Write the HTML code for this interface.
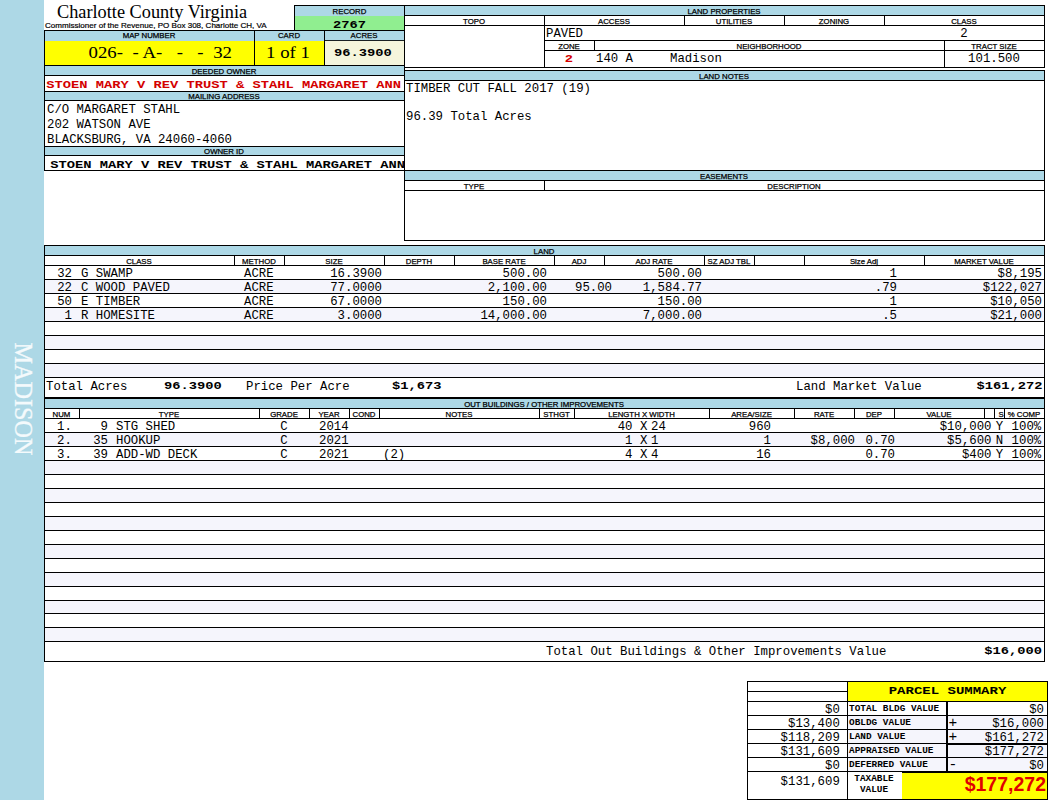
<!DOCTYPE html>
<html lang="en"><head><meta charset="utf-8"><title>Charlotte County Virginia - Property Card</title>
<style>
html,body{margin:0;padding:0;background:#fff;}
body{width:1050px;height:800px;position:relative;overflow:hidden;}
div{position:absolute;box-sizing:border-box;white-space:nowrap;}
.h{font-family:"Liberation Sans",Arial,sans-serif;font-size:7.8px;line-height:10px;color:#000;-webkit-text-stroke:0.25px #000;}
.m{font-family:"Liberation Mono","Courier New",monospace;font-size:12.33px;line-height:14px;color:#000;white-space:pre;}
.mb{font-family:"Liberation Mono","Courier New",monospace;font-size:13.75px;line-height:14px;font-weight:bold;color:#000;white-space:pre;transform:scaleY(.84);transform-origin:0 10.7px;}
.sb{font-family:"Liberation Mono","Courier New",monospace;font-size:9.4px;line-height:12px;font-weight:bold;color:#000;white-space:pre;}
.red{color:#d40000;}
.title{font-family:"Liberation Serif","Times New Roman",serif;font-size:18.3px;line-height:20px;color:#000;}
.sub{-webkit-text-stroke:0.2px #000;font-family:"Liberation Sans",Arial,sans-serif;font-size:8.05px;line-height:10px;color:#000;}
.big{font-family:"Liberation Serif","Times New Roman",serif;font-size:18.8px;line-height:24px;color:#000;transform:scaleY(.94);transform-origin:0 17px;}
.tv{font-family:"Liberation Sans",Arial,sans-serif;font-size:19.5px;line-height:26px;font-weight:bold;color:#e00000;}
</style></head>
<body>
<div style="left:0px;top:0px;width:44px;height:800px;background:#add8e6;"></div>
<div style="left:-37.5px;top:386.4px;width:120px;height:26px;line-height:26px;text-align:center;transform:rotate(90deg);font-family:'Liberation Serif','Times New Roman',serif;font-size:24.2px;color:#f4fafc;-webkit-text-stroke:0.3px #f4fafc;">MADISON</div>
<div class="title" style="left:57px;top:2.2px;">Charlotte County Virginia</div>
<div class="sub" style="left:45px;top:20.5px;">Commissioner of the Revenue, PO Box 308, Charlotte CH, VA</div>
<div style="left:294px;top:5px;width:111px;height:11px;background:#add8e6;"></div>
<div style="left:294px;top:16px;width:111px;height:14px;background:#90ee90;"></div>
<div style="left:294px;top:5px;width:111px;height:1px;background:#000;"></div>
<div style="left:294px;top:5px;width:1px;height:25px;background:#000;"></div>
<div class="h" style="left:294px;top:6.5px;width:111px;text-align:center;">RECORD</div>
<div class="mb" style="left:294px;top:17.9px;width:111px;text-align:center;">2767</div>
<div style="left:44px;top:30px;width:361px;height:11px;background:#add8e6;"></div>
<div style="left:44px;top:41px;width:280px;height:24px;background:#ffff00;"></div>
<div style="left:325px;top:41px;width:79px;height:24px;background:#f5f5dc;"></div>
<div style="left:325px;top:40px;width:79px;height:1px;background:rgba(0,0,0,.85);"></div>
<div style="left:44px;top:30px;width:361px;height:1px;background:#000;"></div>
<div style="left:44px;top:65px;width:361px;height:1px;background:#000;"></div>
<div style="left:44px;top:30px;width:1px;height:141px;background:#000;"></div>
<div style="left:254px;top:30px;width:1px;height:36px;background:#000;"></div>
<div style="left:324px;top:30px;width:1px;height:36px;background:#000;"></div>
<div style="left:404px;top:5px;width:1px;height:236px;background:#000;"></div>
<div class="h" style="left:44px;top:31.0px;width:210px;text-align:center;">MAP NUMBER</div>
<div class="h" style="left:254px;top:31.0px;width:70px;text-align:center;">CARD</div>
<div class="h" style="left:324px;top:31.0px;width:80px;text-align:center;">ACRES</div>
<div class="big" style="left:88.5px;top:39.7px;white-space:pre;word-spacing:0.1px;">026-  - A-   -   -  32</div>
<div class="big" style="left:253px;top:40.1px;width:70px;text-align:center;">1 of 1</div>
<div class="mb" style="left:323px;top:45.9px;width:80px;text-align:center;">96.3900</div>
<div style="left:45px;top:66px;width:359px;height:10px;background:#add8e6;"></div>
<div style="left:44px;top:75.0px;width:361px;height:1px;background:#000;"></div>
<div class="h" style="left:44px;top:67.0px;width:360px;text-align:center;">DEEDED OWNER</div>
<div class="mb red" style="left:46.3px;top:78.3px;">STOEN MARY V REV TRUST &amp; STAHL MARGARET ANN</div>
<div style="left:44px;top:91px;width:361px;height:1px;background:#000;"></div>
<div style="left:45px;top:92px;width:359px;height:9px;background:#add8e6;"></div>
<div style="left:44px;top:100px;width:361px;height:1px;background:#000;"></div>
<div class="h" style="left:44px;top:91.5px;width:360px;text-align:center;">MAILING ADDRESS</div>
<div class="m" style="left:47px;top:102.7px;">C/O MARGARET STAHL</div>
<div class="m" style="left:47px;top:117.7px;">202 WATSON AVE</div>
<div class="m" style="left:47px;top:132.7px;">BLACKSBURG, VA 24060-4060</div>
<div style="left:44px;top:146px;width:361px;height:1px;background:#000;"></div>
<div style="left:45px;top:147px;width:359px;height:8px;background:#add8e6;"></div>
<div style="left:44px;top:155px;width:361px;height:1px;background:#000;"></div>
<div class="h" style="left:44px;top:146.6px;width:360px;text-align:center;">OWNER ID</div>
<div class="mb" style="left:50.3px;top:157.7px;width:354px;overflow:hidden;">STOEN MARY V REV TRUST &amp; STAHL MARGARET ANN</div>
<div style="left:44px;top:170px;width:361px;height:1px;background:#000;"></div>
<div style="left:405px;top:6px;width:639px;height:9px;background:#add8e6;"></div>
<div style="left:404px;top:5px;width:641px;height:1px;background:#000;"></div>
<div style="left:404px;top:15px;width:641px;height:1px;background:#000;"></div>
<div style="left:404px;top:25px;width:641px;height:1px;background:#000;"></div>
<div style="left:544px;top:40px;width:501px;height:1px;background:#000;"></div>
<div style="left:544px;top:50px;width:501px;height:1px;background:#000;"></div>
<div style="left:404px;top:67px;width:641px;height:1px;background:#000;"></div>
<div style="left:1044px;top:5px;width:1px;height:63px;background:#000;"></div>
<div class="h" style="left:404px;top:6.5px;width:640px;text-align:center;">LAND PROPERTIES</div>
<div class="h" style="left:404px;top:16.5px;width:140px;text-align:center;">TOPO</div>
<div class="h" style="left:544px;top:16.5px;width:140px;text-align:center;">ACCESS</div>
<div style="left:544px;top:15px;width:1px;height:11px;background:#000;"></div>
<div class="h" style="left:684px;top:16.5px;width:100px;text-align:center;">UTILITIES</div>
<div style="left:684px;top:15px;width:1px;height:11px;background:#000;"></div>
<div class="h" style="left:784px;top:16.5px;width:100px;text-align:center;">ZONING</div>
<div style="left:784px;top:15px;width:1px;height:11px;background:#000;"></div>
<div class="h" style="left:884px;top:16.5px;width:160px;text-align:center;">CLASS</div>
<div style="left:884px;top:15px;width:1px;height:11px;background:#000;"></div>
<div style="left:544px;top:25px;width:1px;height:43px;background:#000;"></div>
<div class="m" style="left:546px;top:26.7px;">PAVED</div>
<div class="m" style="left:884px;top:26.7px;width:160px;text-align:center;">2</div>
<div style="left:594px;top:40px;width:1px;height:11px;background:#000;"></div>
<div style="left:944px;top:40px;width:1px;height:28px;background:#000;"></div>
<div class="h" style="left:544px;top:41.5px;width:50px;text-align:center;">ZONE</div>
<div class="h" style="left:594px;top:41.5px;width:350px;text-align:center;">NEIGHBORHOOD</div>
<div class="h" style="left:944px;top:41.5px;width:100px;text-align:center;">TRACT SIZE</div>
<div class="mb red" style="left:544px;top:51.5px;width:50px;text-align:center;">2</div>
<div class="m" style="left:596px;top:52.2px;">140 A</div>
<div class="m" style="left:670px;top:52.2px;">Madison</div>
<div class="m" style="left:944px;top:52.2px;width:100px;text-align:center;">101.500</div>
<div style="left:405px;top:71px;width:639px;height:9px;background:#add8e6;"></div>
<div style="left:404px;top:70px;width:641px;height:1px;background:#000;"></div>
<div style="left:404px;top:80px;width:641px;height:1px;background:#000;"></div>
<div style="left:404px;top:170px;width:641px;height:1px;background:#000;"></div>
<div style="left:1044px;top:70px;width:1px;height:171px;background:#000;"></div>
<div class="h" style="left:404px;top:71.5px;width:640px;text-align:center;">LAND NOTES</div>
<div class="m" style="left:406px;top:82.2px;">TIMBER CUT FALL 2017 (19)</div>
<div class="m" style="left:406px;top:110.2px;">96.39 Total Acres</div>
<div style="left:405px;top:171px;width:639px;height:9px;background:#add8e6;"></div>
<div style="left:404px;top:180px;width:641px;height:1px;background:#000;"></div>
<div style="left:404px;top:190px;width:641px;height:1px;background:#000;"></div>
<div style="left:404px;top:240px;width:641px;height:1px;background:#000;"></div>
<div style="left:544px;top:180px;width:1px;height:11px;background:#000;"></div>
<div class="h" style="left:404px;top:171.5px;width:640px;text-align:center;">EASEMENTS</div>
<div class="h" style="left:404px;top:181.5px;width:140px;text-align:center;">TYPE</div>
<div class="h" style="left:544px;top:181.5px;width:500px;text-align:center;">DESCRIPTION</div>
<div style="left:45px;top:246px;width:999px;height:9px;background:#add8e6;"></div>
<div style="left:44px;top:245px;width:1001px;height:1px;background:#000;"></div>
<div style="left:44px;top:255px;width:1001px;height:1px;background:#000;"></div>
<div style="left:44px;top:265px;width:1001px;height:1px;background:#000;"></div>
<div style="left:44px;top:245px;width:1px;height:417px;background:#000;"></div>
<div style="left:1044px;top:245px;width:1px;height:417px;background:#000;"></div>
<div class="h" style="left:44px;top:246.5px;width:1000px;text-align:center;">LAND</div>
<div class="h" style="left:44px;top:256.5px;width:190px;text-align:center;">CLASS</div>
<div class="h" style="left:234px;top:256.5px;width:50px;text-align:center;">METHOD</div>
<div style="left:234px;top:255px;width:1px;height:11px;background:#000;"></div>
<div class="h" style="left:284px;top:256.5px;width:100px;text-align:center;">SIZE</div>
<div style="left:284px;top:255px;width:1px;height:11px;background:#000;"></div>
<div class="h" style="left:384px;top:256.5px;width:70px;text-align:center;">DEPTH</div>
<div style="left:384px;top:255px;width:1px;height:11px;background:#000;"></div>
<div class="h" style="left:454px;top:256.5px;width:100px;text-align:center;">BASE RATE</div>
<div style="left:454px;top:255px;width:1px;height:11px;background:#000;"></div>
<div class="h" style="left:554px;top:256.5px;width:50px;text-align:center;">ADJ</div>
<div style="left:554px;top:255px;width:1px;height:11px;background:#000;"></div>
<div class="h" style="left:604px;top:256.5px;width:100px;text-align:center;">ADJ RATE</div>
<div style="left:604px;top:255px;width:1px;height:11px;background:#000;"></div>
<div class="h" style="left:704px;top:256.5px;width:50px;text-align:center;">SZ ADJ TBL</div>
<div style="left:704px;top:255px;width:1px;height:11px;background:#000;"></div>
<div style="left:754px;top:255px;width:1px;height:11px;background:#000;"></div>
<div class="h" style="left:804px;top:256.5px;width:120px;text-align:center;">Size Adj</div>
<div style="left:804px;top:255px;width:1px;height:11px;background:#000;"></div>
<div class="h" style="left:924px;top:256.5px;width:120px;text-align:center;">MARKET VALUE</div>
<div style="left:924px;top:255px;width:1px;height:11px;background:#000;"></div>
<div style="left:44px;top:279px;width:1001px;height:1px;background:#000;"></div>
<div style="left:45px;top:280px;width:999px;height:13px;background:#f5f5fc;"></div>
<div style="left:44px;top:293px;width:1001px;height:1px;background:#000;"></div>
<div style="left:44px;top:307px;width:1001px;height:1px;background:#000;"></div>
<div style="left:45px;top:308px;width:999px;height:13px;background:#f5f5fc;"></div>
<div style="left:44px;top:321px;width:1001px;height:1px;background:#000;"></div>
<div style="left:44px;top:335px;width:1001px;height:1px;background:#000;"></div>
<div style="left:45px;top:336px;width:999px;height:13px;background:#f5f5fc;"></div>
<div style="left:44px;top:349px;width:1001px;height:1px;background:#000;"></div>
<div style="left:44px;top:363px;width:1001px;height:1px;background:#000;"></div>
<div style="left:45px;top:364px;width:999px;height:13px;background:#f5f5fc;"></div>
<div style="left:44px;top:377px;width:1001px;height:1px;background:#000;"></div>
<div class="m" style="left:44px;top:266.7px;width:28px;text-align:right;">32</div>
<div class="m" style="left:81px;top:266.7px;">G SWAMP</div>
<div class="m" style="left:244px;top:266.7px;">ACRE</div>
<div class="m" style="left:284px;top:266.7px;width:98px;text-align:right;">16.3900</div>
<div class="m" style="left:454px;top:266.7px;width:93px;text-align:right;">500.00</div>
<div class="m" style="left:554px;top:266.7px;width:58px;text-align:right;"></div>
<div class="m" style="left:604px;top:266.7px;width:98px;text-align:right;">500.00</div>
<div class="m" style="left:804px;top:266.7px;width:93px;text-align:right;">1</div>
<div class="m" style="left:924px;top:266.7px;width:118px;text-align:right;">$8,195</div>
<div class="m" style="left:44px;top:280.7px;width:28px;text-align:right;">22</div>
<div class="m" style="left:81px;top:280.7px;">C WOOD PAVED</div>
<div class="m" style="left:244px;top:280.7px;">ACRE</div>
<div class="m" style="left:284px;top:280.7px;width:98px;text-align:right;">77.0000</div>
<div class="m" style="left:454px;top:280.7px;width:93px;text-align:right;">2,100.00</div>
<div class="m" style="left:554px;top:280.7px;width:58px;text-align:right;">95.00</div>
<div class="m" style="left:604px;top:280.7px;width:98px;text-align:right;">1,584.77</div>
<div class="m" style="left:804px;top:280.7px;width:93px;text-align:right;">.79</div>
<div class="m" style="left:924px;top:280.7px;width:118px;text-align:right;">$122,027</div>
<div class="m" style="left:44px;top:294.7px;width:28px;text-align:right;">50</div>
<div class="m" style="left:81px;top:294.7px;">E TIMBER</div>
<div class="m" style="left:244px;top:294.7px;">ACRE</div>
<div class="m" style="left:284px;top:294.7px;width:98px;text-align:right;">67.0000</div>
<div class="m" style="left:454px;top:294.7px;width:93px;text-align:right;">150.00</div>
<div class="m" style="left:554px;top:294.7px;width:58px;text-align:right;"></div>
<div class="m" style="left:604px;top:294.7px;width:98px;text-align:right;">150.00</div>
<div class="m" style="left:804px;top:294.7px;width:93px;text-align:right;">1</div>
<div class="m" style="left:924px;top:294.7px;width:118px;text-align:right;">$10,050</div>
<div class="m" style="left:44px;top:308.7px;width:28px;text-align:right;">1</div>
<div class="m" style="left:81px;top:308.7px;">R HOMESITE</div>
<div class="m" style="left:244px;top:308.7px;">ACRE</div>
<div class="m" style="left:284px;top:308.7px;width:98px;text-align:right;">3.0000</div>
<div class="m" style="left:454px;top:308.7px;width:93px;text-align:right;">14,000.00</div>
<div class="m" style="left:554px;top:308.7px;width:58px;text-align:right;"></div>
<div class="m" style="left:604px;top:308.7px;width:98px;text-align:right;">7,000.00</div>
<div class="m" style="left:804px;top:308.7px;width:93px;text-align:right;">.5</div>
<div class="m" style="left:924px;top:308.7px;width:118px;text-align:right;">$21,000</div>
<div class="m" style="left:46px;top:379.7px;">Total Acres</div>
<div class="mb" style="left:164px;top:379.0px;">96.3900</div>
<div class="m" style="left:246px;top:379.7px;">Price Per Acre</div>
<div class="mb" style="left:392px;top:379.0px;">$1,673</div>
<div class="m" style="left:796px;top:379.7px;">Land Market Value</div>
<div class="mb" style="left:924px;top:379.0px;width:118.5px;text-align:right;">$161,272</div>
<div style="left:44px;top:397px;width:1001px;height:2px;background:#000;"></div>
<div style="left:45px;top:399px;width:999px;height:9px;background:#add8e6;"></div>
<div style="left:44px;top:408px;width:1001px;height:1px;background:#000;"></div>
<div style="left:44px;top:418px;width:1001px;height:1px;background:#000;"></div>
<div class="h" style="left:44px;top:399.5px;width:1000px;text-align:center;">OUT BUILDINGS / OTHER IMPROVEMENTS</div>
<div class="h" style="left:44px;top:409.5px;width:35px;text-align:center;">NUM</div>
<div class="h" style="left:79px;top:409.5px;width:180px;text-align:center;">TYPE</div>
<div style="left:79px;top:408px;width:1px;height:11px;background:#000;"></div>
<div class="h" style="left:259px;top:409.5px;width:50px;text-align:center;">GRADE</div>
<div style="left:259px;top:408px;width:1px;height:11px;background:#000;"></div>
<div class="h" style="left:309px;top:409.5px;width:40px;text-align:center;">YEAR</div>
<div style="left:309px;top:408px;width:1px;height:11px;background:#000;"></div>
<div class="h" style="left:349px;top:409.5px;width:30px;text-align:center;">COND</div>
<div style="left:349px;top:408px;width:1px;height:11px;background:#000;"></div>
<div class="h" style="left:379px;top:409.5px;width:160px;text-align:center;">NOTES</div>
<div style="left:379px;top:408px;width:1px;height:11px;background:#000;"></div>
<div class="h" style="left:539px;top:409.5px;width:35px;text-align:center;">STHGT</div>
<div style="left:539px;top:408px;width:1px;height:11px;background:#000;"></div>
<div class="h" style="left:574px;top:409.5px;width:135px;text-align:center;">LENGTH X WIDTH</div>
<div style="left:574px;top:408px;width:1px;height:11px;background:#000;"></div>
<div class="h" style="left:709px;top:409.5px;width:85px;text-align:center;">AREA/SIZE</div>
<div style="left:709px;top:408px;width:1px;height:11px;background:#000;"></div>
<div class="h" style="left:794px;top:409.5px;width:60px;text-align:center;">RATE</div>
<div style="left:794px;top:408px;width:1px;height:11px;background:#000;"></div>
<div class="h" style="left:854px;top:409.5px;width:40px;text-align:center;">DEP</div>
<div style="left:854px;top:408px;width:1px;height:11px;background:#000;"></div>
<div class="h" style="left:894px;top:409.5px;width:90px;text-align:center;">VALUE</div>
<div style="left:894px;top:408px;width:1px;height:11px;background:#000;"></div>
<div style="left:984px;top:408px;width:1px;height:11px;background:#000;"></div>
<div class="h" style="left:996px;top:409.5px;width:10px;text-align:center;">S</div>
<div style="left:994px;top:408px;width:1px;height:11px;background:#000;"></div>
<div class="h" style="left:1004px;top:409.5px;width:40px;text-align:center;">% COMP</div>
<div style="left:1004px;top:408px;width:1px;height:11px;background:#000;"></div>
<div style="left:44px;top:432px;width:1001px;height:1px;background:#000;"></div>
<div style="left:45px;top:433px;width:999px;height:13px;background:#f5f5fc;"></div>
<div style="left:44px;top:446px;width:1001px;height:1px;background:#000;"></div>
<div style="left:44px;top:460px;width:1001px;height:1px;background:#000;"></div>
<div style="left:45px;top:461px;width:999px;height:13px;background:#f5f5fc;"></div>
<div style="left:44px;top:474px;width:1001px;height:1px;background:#000;"></div>
<div style="left:44px;top:488px;width:1001px;height:1px;background:#000;"></div>
<div style="left:45px;top:489px;width:999px;height:13px;background:#f5f5fc;"></div>
<div style="left:44px;top:502px;width:1001px;height:1px;background:#000;"></div>
<div style="left:44px;top:516px;width:1001px;height:1px;background:#000;"></div>
<div style="left:45px;top:517px;width:999px;height:13px;background:#f5f5fc;"></div>
<div style="left:44px;top:530px;width:1001px;height:1px;background:#000;"></div>
<div style="left:44px;top:544px;width:1001px;height:1px;background:#000;"></div>
<div style="left:45px;top:545px;width:999px;height:13px;background:#f5f5fc;"></div>
<div style="left:44px;top:558px;width:1001px;height:1px;background:#000;"></div>
<div style="left:44px;top:572px;width:1001px;height:1px;background:#000;"></div>
<div style="left:45px;top:573px;width:999px;height:13px;background:#f5f5fc;"></div>
<div style="left:44px;top:586px;width:1001px;height:1px;background:#000;"></div>
<div style="left:44px;top:600px;width:1001px;height:1px;background:#000;"></div>
<div style="left:45px;top:601px;width:999px;height:12px;background:#f5f5fc;"></div>
<div style="left:44px;top:613px;width:1001px;height:1px;background:#000;"></div>
<div style="left:44px;top:627px;width:1001px;height:1px;background:#000;"></div>
<div style="left:45px;top:628px;width:999px;height:13px;background:#f5f5fc;"></div>
<div style="left:44px;top:641px;width:1001px;height:1px;background:#000;"></div>
<div class="m" style="left:57px;top:419.7px;">1.</div>
<div class="m" style="left:79px;top:419.7px;width:29px;text-align:right;">9</div>
<div class="m" style="left:116px;top:419.7px;">STG SHED</div>
<div class="m" style="left:259px;top:419.7px;width:50px;text-align:center;">C</div>
<div class="m" style="left:319px;top:419.7px;">2014</div>
<div class="m" style="left:383px;top:419.7px;"></div>
<div class="m" style="left:574px;top:419.7px;width:58.5px;text-align:right;">40</div>
<div class="m" style="left:640px;top:419.7px;">X</div>
<div class="m" style="left:651px;top:419.7px;">24</div>
<div class="m" style="left:709px;top:419.7px;width:62px;text-align:right;">960</div>
<div class="m" style="left:794px;top:419.7px;width:61px;text-align:right;"></div>
<div class="m" style="left:854px;top:419.7px;width:41px;text-align:right;"></div>
<div class="m" style="left:894px;top:419.7px;width:97.5px;text-align:right;">$10,000</div>
<div class="m" style="left:995.7px;top:419.7px;">Y</div>
<div class="m" style="left:1004px;top:419.7px;width:37.2px;text-align:right;">100%</div>
<div class="m" style="left:57px;top:433.7px;">2.</div>
<div class="m" style="left:79px;top:433.7px;width:29px;text-align:right;">35</div>
<div class="m" style="left:116px;top:433.7px;">HOOKUP</div>
<div class="m" style="left:259px;top:433.7px;width:50px;text-align:center;">C</div>
<div class="m" style="left:319px;top:433.7px;">2021</div>
<div class="m" style="left:383px;top:433.7px;"></div>
<div class="m" style="left:574px;top:433.7px;width:58.5px;text-align:right;">1</div>
<div class="m" style="left:640px;top:433.7px;">X</div>
<div class="m" style="left:651px;top:433.7px;">1</div>
<div class="m" style="left:709px;top:433.7px;width:62px;text-align:right;">1</div>
<div class="m" style="left:794px;top:433.7px;width:61px;text-align:right;">$8,000</div>
<div class="m" style="left:854px;top:433.7px;width:41px;text-align:right;">0.70</div>
<div class="m" style="left:894px;top:433.7px;width:97.5px;text-align:right;">$5,600</div>
<div class="m" style="left:995.7px;top:433.7px;">N</div>
<div class="m" style="left:1004px;top:433.7px;width:37.2px;text-align:right;">100%</div>
<div class="m" style="left:57px;top:447.7px;">3.</div>
<div class="m" style="left:79px;top:447.7px;width:29px;text-align:right;">39</div>
<div class="m" style="left:116px;top:447.7px;">ADD-WD DECK</div>
<div class="m" style="left:259px;top:447.7px;width:50px;text-align:center;">C</div>
<div class="m" style="left:319px;top:447.7px;">2021</div>
<div class="m" style="left:383px;top:447.7px;">(2)</div>
<div class="m" style="left:574px;top:447.7px;width:58.5px;text-align:right;">4</div>
<div class="m" style="left:640px;top:447.7px;">X</div>
<div class="m" style="left:651px;top:447.7px;">4</div>
<div class="m" style="left:709px;top:447.7px;width:62px;text-align:right;">16</div>
<div class="m" style="left:794px;top:447.7px;width:61px;text-align:right;"></div>
<div class="m" style="left:854px;top:447.7px;width:41px;text-align:right;">0.70</div>
<div class="m" style="left:894px;top:447.7px;width:97.5px;text-align:right;">$400</div>
<div class="m" style="left:995.7px;top:447.7px;">Y</div>
<div class="m" style="left:1004px;top:447.7px;width:37.2px;text-align:right;">100%</div>
<div class="m" style="left:546px;top:644.5px;">Total Out Buildings &amp; Other Improvements Value</div>
<div class="mb" style="left:924px;top:643.9px;width:118px;text-align:right;">$16,000</div>
<div style="left:44px;top:661px;width:1001px;height:1px;background:#000;"></div>
<div style="left:848px;top:682px;width:199px;height:19px;background:#ffff00;"></div>
<div style="left:902px;top:773px;width:145px;height:26px;background:#ffff00;"></div>
<div style="left:747px;top:681px;width:301px;height:1px;background:#000;"></div>
<div style="left:747px;top:691px;width:101px;height:1px;background:#000;"></div>
<div style="left:747px;top:701px;width:301px;height:1px;background:#000;"></div>
<div style="left:747px;top:715px;width:301px;height:1px;background:#000;"></div>
<div style="left:747px;top:729px;width:301px;height:1px;background:#000;"></div>
<div style="left:747px;top:757px;width:301px;height:1px;background:#000;"></div>
<div style="left:747px;top:743px;width:200px;height:1px;background:#000;"></div>
<div style="left:947px;top:743px;width:101px;height:2px;background:#000;"></div>
<div style="left:747px;top:771px;width:155px;height:1px;background:#000;"></div>
<div style="left:902px;top:771px;width:146px;height:2px;background:#000;"></div>
<div style="left:747px;top:799px;width:301px;height:1px;background:#000;"></div>
<div style="left:747px;top:681px;width:1px;height:119px;background:#000;"></div>
<div style="left:1047px;top:681px;width:1px;height:119px;background:#000;"></div>
<div style="left:847px;top:681px;width:1px;height:119px;background:#000;"></div>
<div style="left:946px;top:701px;width:2px;height:71px;background:#000;"></div>
<div style="left:848px;top:716px;width:98px;height:13px;background:#f5f5fc;"></div>
<div style="left:948px;top:716px;width:99px;height:13px;background:#f5f5fc;"></div>
<div style="left:848px;top:730px;width:98px;height:13px;background:#f5f5fc;"></div>
<div style="left:948px;top:730px;width:99px;height:13px;background:#f5f5fc;"></div>
<div style="left:848px;top:758px;width:98px;height:13px;background:#f5f5fc;"></div>
<div style="left:948px;top:758px;width:99px;height:13px;background:#f5f5fc;"></div>
<div style="left:948px;top:745px;width:99px;height:12px;background:#f5f5fc;"></div>
<div style="left:848px;top:744px;width:98px;height:13px;background:#f5f5fc;"></div>
<div class="mb" style="left:848px;top:683.3px;width:199px;text-align:center;font-size:14px;">PARCEL SUMMARY</div>
<div class="m" style="left:747px;top:702.7px;width:92.8px;text-align:right;">$0</div>
<div class="sb" style="left:849px;top:702.5px;">TOTAL BLDG VALUE</div>
<div class="m" style="left:948.5px;top:702.2px;font-size:14.5px;"></div>
<div class="m" style="left:948px;top:702.7px;width:96px;text-align:right;">$0</div>
<div class="m" style="left:747px;top:716.7px;width:92.8px;text-align:right;">$13,400</div>
<div class="sb" style="left:849px;top:716.5px;">OBLDG VALUE</div>
<div class="m" style="left:948.5px;top:716.2px;font-size:14.5px;">+</div>
<div class="m" style="left:948px;top:716.7px;width:96px;text-align:right;">$16,000</div>
<div class="m" style="left:747px;top:730.7px;width:92.8px;text-align:right;">$118,209</div>
<div class="sb" style="left:849px;top:730.5px;">LAND VALUE</div>
<div class="m" style="left:948.5px;top:730.2px;font-size:14.5px;">+</div>
<div class="m" style="left:948px;top:730.7px;width:96px;text-align:right;">$161,272</div>
<div class="m" style="left:747px;top:744.7px;width:92.8px;text-align:right;">$131,609</div>
<div class="sb" style="left:849px;top:744.5px;">APPRAISED VALUE</div>
<div class="m" style="left:948.5px;top:744.2px;font-size:14.5px;"></div>
<div class="m" style="left:948px;top:744.7px;width:96px;text-align:right;">$177,272</div>
<div class="m" style="left:747px;top:758.7px;width:92.8px;text-align:right;">$0</div>
<div class="sb" style="left:849px;top:758.5px;">DEFERRED VALUE</div>
<div class="m" style="left:948.5px;top:758.2px;font-size:14.5px;">-</div>
<div class="m" style="left:948px;top:758.7px;width:96px;text-align:right;">$0</div>
<div class="m" style="left:747px;top:774.7px;width:92.8px;text-align:right;">$131,609</div>
<div class="sb" style="left:849px;top:773px;width:50px;text-align:center;line-height:11px;">TAXABLE<br>VALUE</div>
<div class="tv" style="left:903px;top:771px;width:143px;text-align:right;">$177,272</div>
</body></html>
